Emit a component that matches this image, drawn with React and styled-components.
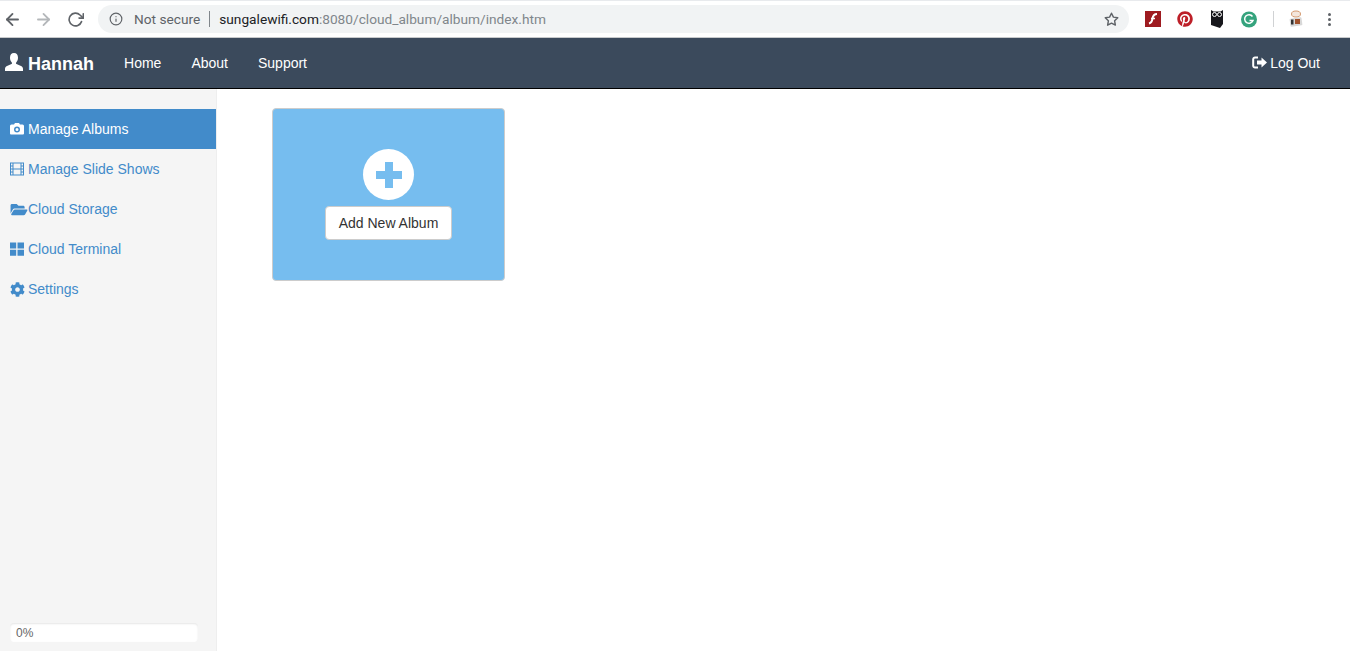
import React from 'react';
import styled, { createGlobalStyle } from 'styled-components';
import { FaFolderOpen, FaCog, FaPinterest } from 'react-icons/fa';
import { FiArrowLeft, FiArrowRight, FiRotateCw, FiInfo, FiStar } from 'react-icons/fi';

const Global = createGlobalStyle`
  html, body { margin: 0; padding: 0; height: 100%; background: #fff; overflow: hidden; }
  * { box-sizing: border-box; }
  body { font-family: "Liberation Sans", Arial, sans-serif; font-size: 14px; }
`;

const Page = styled.div`
  height: 651px;
  display: flex;
  flex-direction: column;
`;

const Browser = styled.div`
  height: 38px;
  flex: none;
  display: flex;
  align-items: center;
  padding-left: 3px;
  background: #fff;
  border-top: 1px solid #e8eaed;
  border-bottom: 1px solid #c8cacc;
  font-family: Roboto, "Liberation Sans", sans-serif;
`;

const BrowserBtn = styled.span`
  width: ${p => p.$size}px;
  height: ${p => p.$size}px;
  margin-right: ${p => p.$gap}px;
  display: flex;
  color: ${p => p.$color};
  svg { width: 100%; height: 100%; stroke-width: 2.3; }
`;

const Omnibox = styled.div`
  width: 1031px;
  height: 28px;
  padding: 0 10px 0 11px;
  display: flex;
  align-items: center;
  background: #f1f3f4;
  border-radius: 14px;
  font-size: 13.7px;
  color: #80868b;
  white-space: nowrap;
`;

const NotSecure = styled.span`
  color: #5f6368;
  margin-left: 11px;
  padding-right: 9px;
  margin-right: 9px;
  border-right: 1px solid #80868b;
  line-height: 16px;
`;

const Host = styled.span`
  color: #202124;
`;

const Star = styled.span`
  margin-left: auto;
  display: flex;
  color: #5f6368;
  svg { stroke-width: 2.3; }
`;

const Extensions = styled.div`
  display: flex;
  align-items: center;
  margin-left: 16px;
`;

const Ext = styled.span`
  width: 16px;
  height: 18px;
  margin-right: ${p => p.$gap}px;
  display: flex;
  align-items: center;
  justify-content: center;
`;

const ExtDivider = styled.span`
  width: 1px;
  height: 16px;
  background: #d0d2d4;
  margin-right: 14px;
`;

const Kebab = styled.span`
  display: flex;
  flex-direction: column;
  gap: 2px;
  margin-left: 1px;
  i { width: 3px; height: 3px; border-radius: 50%; background: #5f6368; display: block; }
`;

const Navbar = styled.nav`
  height: 51px;
  flex: none;
  display: flex;
  align-items: center;
  padding: 0 30px 1px 5px;
  background: #3b4a5c;
  border-bottom: 1px solid #000;
  color: #fff;
`;

const Brand = styled.a`
  display: flex;
  align-items: center;
  gap: 5px;
  margin: 4px 30px 0 0;
  font-size: 18px;
  font-weight: bold;
`;

const NavLink = styled.a`
  margin-right: 30px;
  font-size: 14px;
`;

const LogOut = styled.a`
  margin-left: auto;
  display: flex;
  align-items: center;
  gap: 3px;
  font-size: 14px;
`;

const Body = styled.div`
  flex: 1;
  display: flex;
  min-height: 0;
`;

const Sidebar = styled.aside`
  width: 217px;
  flex: none;
  display: flex;
  flex-direction: column;
  padding: 20px 0 9px;
  background: #f5f5f5;
  border-right: 1px solid #eee;
`;

const SideItem = styled.a`
  height: 40px;
  display: flex;
  align-items: center;
  padding-left: 10px;
  font-size: 14px;
  color: ${p => (p.$active ? '#fff' : '#428bca')};
  background: ${p => (p.$active ? '#428bca' : 'transparent')};
`;

const SideIcon = styled.span`
  width: 18px;
  display: flex;
  align-items: center;
  svg { width: ${p => p.$w || 14}px; height: ${p => p.$h || 14}px; flex: none; }
`;

const Progress = styled.div`
  margin: auto 18px 0 10px;
  height: 19px;
  padding-left: 6px;
  display: flex;
  align-items: center;
  background: #fff;
  border-radius: 4px;
  box-shadow: inset 0 1px 2px rgba(0, 0, 0, 0.1);
  font-size: 12px;
  color: #666;
`;

const Content = styled.main`
  flex: 1;
  padding: 19px 55px;
`;

const AlbumCard = styled.div`
  width: 233px;
  height: 173px;
  padding-top: 40px;
  display: flex;
  flex-direction: column;
  align-items: center;
  background: #76bdef;
  border: 1px solid #ccc;
  border-radius: 4px;
`;

const PlusCircle = styled.div`
  width: 51px;
  height: 51px;
  display: flex;
  align-items: center;
  justify-content: center;
  background: #fff;
  border-radius: 50%;
`;

const AddButton = styled.button`
  margin-top: 6px;
  width: 127px;
  height: 34px;
  padding: 0;
  background: #fff;
  border: 1px solid #ccc;
  border-radius: 4px;
  font-family: inherit;
  font-size: 14px;
  color: #333;
`;

const UserGlyph = () => (
  <svg width="18" height="18" viewBox="0 0 18 18" style={{ marginTop: -6 }}>
    <path
      d="M9 0c2.700 0 4 2 4 4.800 0 2-.8 3.700-1.800 4.700-.4.500-.3 1.300.3 1.600l4.500 2c1.400.6 2 1.500 2 2.900v2H0v-2c0-1.400.6-2.300 2-2.900l4.500-2c.6-.3.7-1.100.3-1.600C5.800 8.500 5 6.800 5 4.800 5 2 6.300 0 9 0z"
      fill="#fff"
    />
  </svg>
);

const CameraGlyph = () => (
  <svg viewBox="0 0 14 14">
    <path
      fillRule="evenodd"
      d="M1.500 2.500H4L5 1h4l1 1.500h2.500A1.500 1.500 0 0 1 14 4v7.500a1 1 0 0 1-1 1H1a1 1 0 0 1-1-1V4a1.500 1.500 0 0 1 1.500-1.500zM7 4.500a3 3 0 1 0 0 6 3 3 0 0 0 0-6zM7 6a1.500 1.500 0 1 1 0 3 1.500 1.500 0 0 1 0-3z"
      fill="#fff"
    />
  </svg>
);

const FilmGlyph = () => (
  <svg viewBox="0 0 14 14">
    <path
      fillRule="evenodd"
      d="M0 .5h14v13H0zM1 1.500v2h1.500v-2zM1 4.500v2h1.500v-2zM1 7.500v2h1.500v-2zM1 10.500v2h1.500v-2zM11.500 1.500v2H13v-2zM11.500 4.500v2H13v-2zM11.500 7.500v2H13v-2zM11.500 10.500v2H13v-2zM3.500 1.500v5h7v-5zM3.500 7.500v5h7v-5z"
      fill="#428bca"
    />
  </svg>
);

const GridGlyph = () => (
  <svg viewBox="0 0 14 14">
    <path d="M0 .5h6.200v6H0zM7.500.5H14v6H7.500zM0 7.800h6.200v6H0zM7.500 7.800H14v6H7.500z" fill="#428bca" />
  </svg>
);

export default function App() {
  return (
    <Page>
      <Global />
      <Browser>
        <BrowserBtn $size={19} $color="#5f6368" $gap={12}><FiArrowLeft /></BrowserBtn>
        <BrowserBtn $size={19} $color="#b4b7ba" $gap={14}><FiArrowRight /></BrowserBtn>
        <BrowserBtn $size={17} $color="#5f6368" $gap={14}><FiRotateCw /></BrowserBtn>
        <Omnibox>
          <FiInfo size={14} color="#5f6368" />
          <NotSecure>Not secure</NotSecure>
          <Host>sungalewifi.com</Host>:8080/cloud_album/album/index.htm
          <Star><FiStar size={15} /></Star>
        </Omnibox>
        <Extensions>
          <Ext $gap={16}>
            <svg width="16" height="16" viewBox="0 0 16 16">
              <rect width="16" height="16" fill="#9e1b20" />
              <path d="M12 3c-3 0-4 1.500-4.500 4.500C7 10.500 6 12 4 12.500" stroke="#fff" strokeWidth="2" fill="none" />
              <path d="M6 7.500h4" stroke="#fff" strokeWidth="1.500" />
            </svg>
          </Ext>
          <Ext $gap={16}><FaPinterest size={16} color="#bd1f28" /></Ext>
          <Ext $gap={16}>
            <svg width="14" height="18" viewBox="0 0 14 18">
              <path d="M1 0l2.500 1.500h7L13 0v14l-3 4-9-3z" fill="#17171c" />
              <circle cx="4.500" cy="4.500" r="2" fill="none" stroke="#fff" />
              <circle cx="9.500" cy="4.500" r="2" fill="none" stroke="#fff" />
            </svg>
          </Ext>
          <Ext $gap={16}>
            <svg width="17" height="17" viewBox="0 0 16 16">
              <circle cx="8" cy="8" r="8" fill="#35a37d" />
              <path d="M11.500 5A4.300 4.300 0 1 0 12 9H8.500" fill="none" stroke="#fff" strokeWidth="1.500" />
            </svg>
          </Ext>
          <ExtDivider />
          <Ext $gap={23}>
            <svg width="16" height="18" viewBox="0 0 16 18">
              <ellipse cx="8" cy="4" rx="4.500" ry="3" fill="#f4e6dc" stroke="#d49a70" />
              <rect x="2" y="8" width="12" height="8" rx="1" fill="#d8d8d8" transform="rotate(-8 8 12)" />
              <rect x="7" y="9" width="5" height="5" fill="#a0522d" />
              <rect x="3" y="9.500" width="2.500" height="5" fill="#333" />
            </svg>
          </Ext>
          <Kebab><i /><i /><i /></Kebab>
        </Extensions>
      </Browser>
      <Navbar>
        <Brand><UserGlyph />Hannah</Brand>
        <NavLink>Home</NavLink>
        <NavLink>About</NavLink>
        <NavLink>Support</NavLink>
        <LogOut>
          <svg width="15" height="13" viewBox="0 0 15 13">
            <path d="M6 1.500H3A1.800 1.800 0 0 0 1.200 3.300v6.400A1.800 1.800 0 0 0 3 11.500h3" fill="none" stroke="#fff" strokeWidth="2" />
            <path d="M5 4.500h4.500V1.500L15 6.500l-5.500 5v-3H5z" fill="#fff" />
          </svg>
          Log Out
        </LogOut>
      </Navbar>
      <Body>
        <Sidebar>
          <SideItem $active><SideIcon><CameraGlyph /></SideIcon>Manage Albums</SideItem>
          <SideItem><SideIcon><FilmGlyph /></SideIcon>Manage Slide Shows</SideItem>
          <SideItem><SideIcon $w={18} $h={15}><FaFolderOpen /></SideIcon>Cloud Storage</SideItem>
          <SideItem><SideIcon><GridGlyph /></SideIcon>Cloud Terminal</SideItem>
          <SideItem><SideIcon $w={15} $h={15}><FaCog /></SideIcon>Settings</SideItem>
          <Progress>0%</Progress>
        </Sidebar>
        <Content>
          <AlbumCard>
            <PlusCircle>
              <svg width="26" height="26" viewBox="0 0 26 26">
                <path d="M9 0h8v9h9v8h-9v9H9v-9H0V9h9z" fill="#76bdef" />
              </svg>
            </PlusCircle>
            <AddButton>Add New Album</AddButton>
          </AlbumCard>
        </Content>
      </Body>
    </Page>
  );
}
